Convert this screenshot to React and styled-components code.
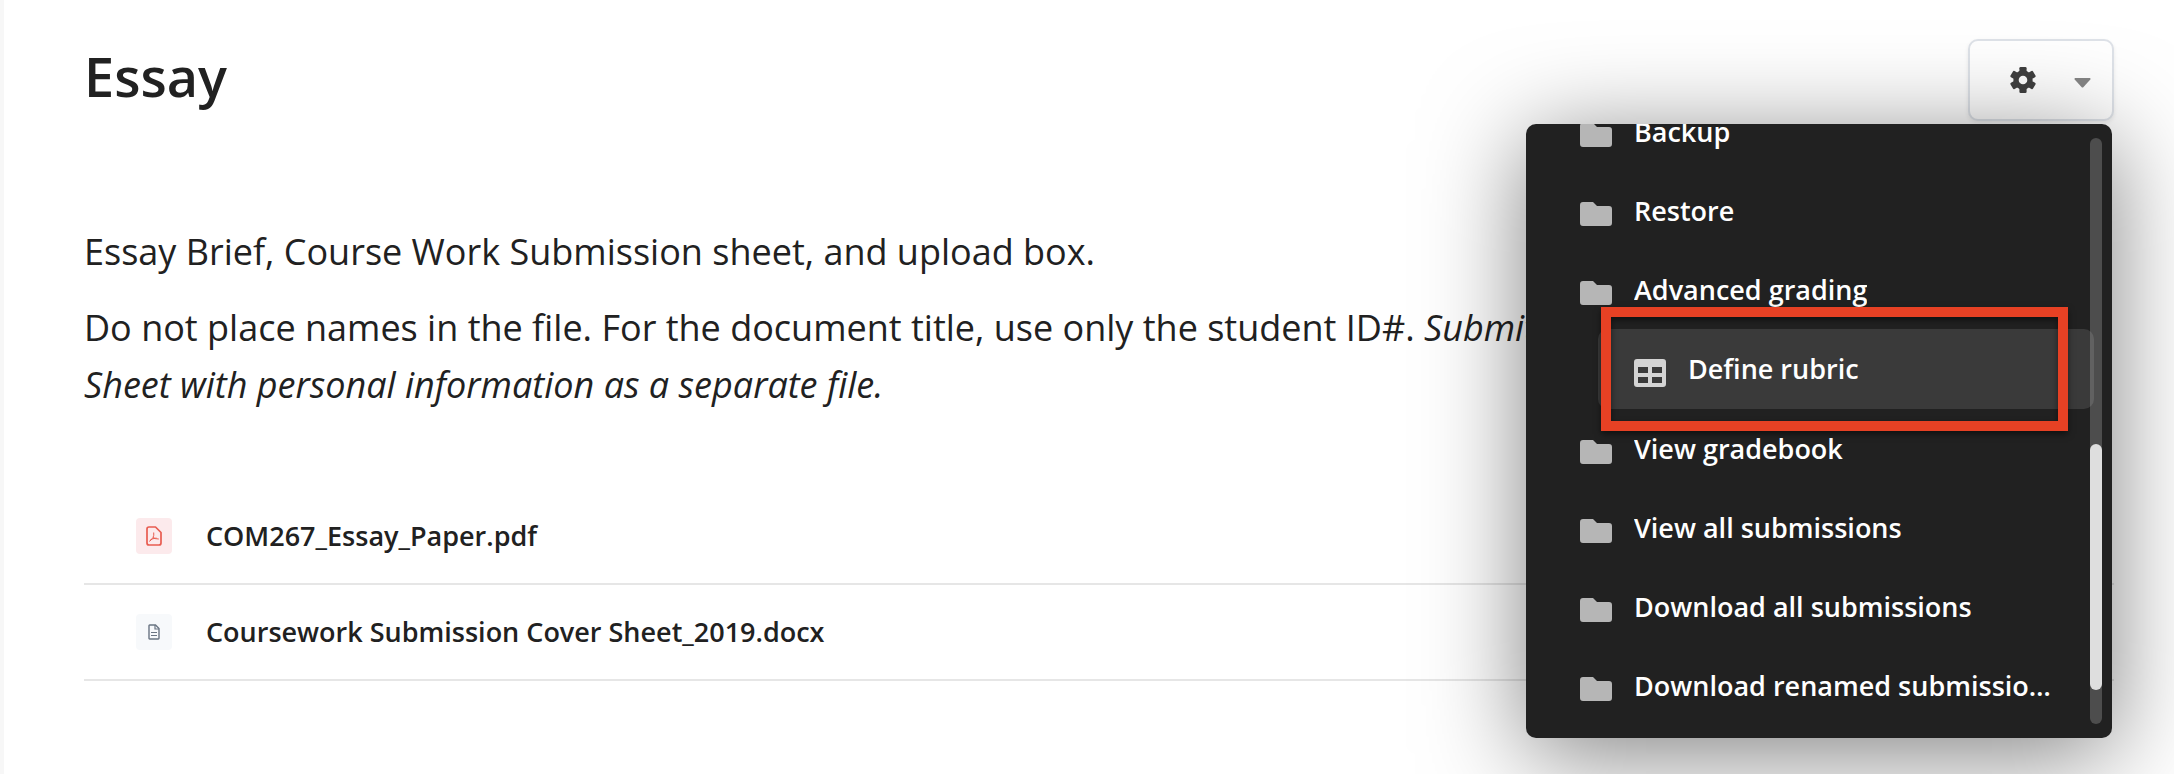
import React from "react";
import styled, { createGlobalStyle } from "styled-components";

const GlobalStyle = createGlobalStyle`
  *, *::before, *::after { box-sizing: border-box; }
  body {
    margin: 0;
    background: #fff;
    color: #212121;
    font-family: "Open Sans", "Noto Sans", sans-serif;
  }
`;

const Page = styled.main`
  min-height: 100vh;
  padding: 39px 60px 0 80px;
  border-left: 4px solid #f7f7f7;
`;

const Header = styled.header`
  display: flex;
  align-items: flex-start;
  justify-content: space-between;
  margin-bottom: 102px;
`;

const Title = styled.h1`
  margin: 0;
  font-size: 54px;
  font-weight: 600;
  line-height: 74px;
`;

const Settings = styled.div`
  position: relative;
`;

const SettingsButton = styled.button`
  display: flex;
  align-items: center;
  justify-content: space-between;
  width: 146px;
  height: 82px;
  padding: 0 21px 0 40px;
  border: 2px solid #dee2e8;
  border-radius: 10px;
  background: #fff;
  color: #404040;
  box-shadow: 0 2px 4px rgba(0, 0, 0, 0.08);
`;

const Menu = styled.nav`
  position: absolute;
  top: 85px;
  right: 2px;
  display: flex;
  flex-direction: column;
  justify-content: flex-end;
  width: 586px;
  height: 614px;
  padding-bottom: 13px;
  overflow: hidden;
  border-radius: 10px;
  background: #212121;
  box-shadow: 0 16px 100px rgba(0, 0, 0, 0.5);
`;

const MenuList = styled.ul`
  flex: none;
  margin: 0;
  padding: 0;
  list-style: none;
`;

const MenuItem = styled.li`
  position: relative;
  margin: 0 18px 0 ${(p) => (p.$nested ? 72 : 18)}px;
`;

const MenuLink = styled.a`
  display: flex;
  align-items: center;
  gap: 22px;
  height: ${(p) => (p.$active ? 80 : 79)}px;
  padding: 0 36px;
  border-radius: 10px;
  background: ${(p) => (p.$active ? "#3a3a3a" : "transparent")};
  color: #fff;
  font-size: 27px;
  font-weight: 600;
  line-height: 40px;
  text-decoration: none;

  svg { flex: none; }
`;

const MenuLabel = styled.span`
  overflow: hidden;
  text-overflow: ellipsis;
  white-space: nowrap;
`;

const Highlight = styled.span`
  position: absolute;
  z-index: 1;
  inset: -22px 26px -22px 3px;
  border: 10px solid #e74124;
  box-shadow: 0 3px 6px rgba(0, 0, 0, 0.5), inset 0 3px 6px rgba(0, 0, 0, 0.5);
  pointer-events: none;
`;

const ScrollTrack = styled.div`
  position: absolute;
  top: 14px;
  right: 10px;
  bottom: 14px;
  width: 12px;
  border-radius: 6px;
  background: rgba(255, 255, 255, 0.2);
`;

const ScrollThumb = styled.div`
  height: 246px;
  margin-top: 306px;
  border-radius: 6px;
  background: #dedede;
`;

const Intro = styled.section`
  margin-bottom: 76px;
  font-size: 36px;
  line-height: 57px;
`;

const Paragraph = styled.p`
  margin: 0;

  & + & { margin-top: 19px; }
`;

const FileList = styled.ul`
  margin: 0;
  padding: 0;
  list-style: none;
`;

const FileRow = styled.li`
  display: flex;
  align-items: center;
  gap: 34px;
  height: 96px;
  padding-left: 52px;
  border-bottom: 2px solid #e6e6e6;
`;

const FileBadge = styled.span`
  display: grid;
  place-items: center;
  width: 36px;
  height: 36px;
  border-radius: 4px;
  background: ${(p) => p.$background};
`;

const FileLink = styled.a`
  color: inherit;
  font-size: 27px;
  font-weight: 600;
  line-height: 40px;
  text-decoration: none;
`;

function GearIcon() {
  return (
    <svg width="26" height="26" viewBox="0 0 26 26" aria-hidden="true">
      <mask id="gear-hole">
        <rect width="26" height="26" fill="#fff" />
        <circle cx="13" cy="13" r="4.300" fill="#000" />
      </mask>
      <g mask="url(#gear-hole)" fill="currentColor">
        <circle cx="13" cy="13" r="9.700" />
        <rect x="9.400" width="7.200" height="26" rx="1.200" />
        <rect x="9.400" width="7.200" height="26" rx="1.200" transform="rotate(60 13 13)" />
        <rect x="9.400" width="7.200" height="26" rx="1.200" transform="rotate(120 13 13)" />
      </g>
    </svg>
  );
}

function FolderIcon() {
  return (
    <svg width="32" height="36" viewBox="0 0 32 36" fill="#b6b6b6" aria-hidden="true">
      <path d="M3 9H13L17 13H29Q32 13 32 16V30Q32 33 29 33H3Q0 33 0 30V12Q0 9 3 9Z" />
    </svg>
  );
}

function TableIcon() {
  return (
    <svg width="32" height="36" viewBox="0 0 32 36" fill="#d4d4d4" fillRule="evenodd" aria-hidden="true">
      <path d="M3 8H29Q32 8 32 11V33Q32 36 29 36H3Q0 36 0 33V11Q0 8 3 8ZM4 16V22H14V16ZM18 16V22H28V16ZM4 26V32H14V26ZM18 26V32H28V26Z" />
    </svg>
  );
}

function CaretIcon() {
  return (
    <svg width="17" height="16" viewBox="0 0 17 16" aria-hidden="true">
      <path d="M1 6H16Q17 6.600 16.300 7.500L9.500 15Q8.500 16 7.500 15L.7 7.500Q0 6.600 1 6Z" fill="#868686" />
    </svg>
  );
}

function PdfIcon() {
  return (
    <svg width="16" height="20" viewBox="0 0 16 20" fill="none" stroke="#e85c50" aria-hidden="true">
      <path d="M3 1H9.500L15 6.500V17Q15 19 13 19H3Q1 19 1 17V3Q1 1 3 1Z" strokeWidth="1.700" strokeLinejoin="round" />
      <path d="M7.700 6.500Q8.200 9.500 7 11.500L3.500 15.500M7 11.500Q9 13 12.800 13M3.800 14.500Q6.500 12.300 10.500 12" />
    </svg>
  );
}

function DocIcon() {
  return (
    <svg width="12" height="16" viewBox="0 0 12 16" fill="none" stroke="#6a7583" aria-hidden="true">
      <path d="M1.700 1H7.500L11 4.500V14.300Q11 15 10.300 15H1.700Q1 15 1 14.300V1.700Q1 1 1.700 1Z" strokeWidth="1.400" />
      <path d="M7 1V5H11" strokeWidth="1.200" />
      <path d="M3 8.500H9M3 11.500H9" strokeWidth="1.200" />
    </svg>
  );
}

const menuItems = [
  { label: "Backup" },
  { label: "Restore" },
  { label: "Advanced grading" },
  { label: "Define rubric", nested: true },
  { label: "View gradebook" },
  { label: "View all submissions" },
  { label: "Download all submissions" },
  { label: "Download renamed submissions" },
];

export default function App() {
  return (
    <>
      <GlobalStyle />
      <Page>
        <Header>
          <Title>Essay</Title>
          <Settings>
            <Menu aria-label="Settings">
              <MenuList>
                {menuItems.map(({ label, nested }) => (
                  <MenuItem key={label} $nested={nested}>
                    <MenuLink href="#" $active={nested}>
                      {nested ? <TableIcon /> : <FolderIcon />}
                      <MenuLabel>{label}</MenuLabel>
                    </MenuLink>
                    {nested && <Highlight />}
                  </MenuItem>
                ))}
              </MenuList>
              <ScrollTrack>
                <ScrollThumb />
              </ScrollTrack>
            </Menu>
            <SettingsButton type="button" aria-label="Settings" aria-expanded="true">
              <GearIcon />
              <CaretIcon />
            </SettingsButton>
          </Settings>
        </Header>
        <Intro>
          <Paragraph>Essay Brief, Course Work Submission sheet, and upload box.</Paragraph>
          <Paragraph>
            Do not place names in the file. For the document title, use only the student ID#.{" "}
            <em>
              Submit the Coursework Submission Cover Sheet with personal information as a separate file.
            </em>
          </Paragraph>
        </Intro>
        <FileList>
          <FileRow>
            <FileBadge $background="#fceaec">
              <PdfIcon />
            </FileBadge>
            <FileLink href="#">COM267_Essay_Paper.pdf</FileLink>
          </FileRow>
          <FileRow>
            <FileBadge $background="#f7f9fb">
              <DocIcon />
            </FileBadge>
            <FileLink href="#">Coursework Submission Cover Sheet_2019.docx</FileLink>
          </FileRow>
        </FileList>
      </Page>
    </>
  );
}
